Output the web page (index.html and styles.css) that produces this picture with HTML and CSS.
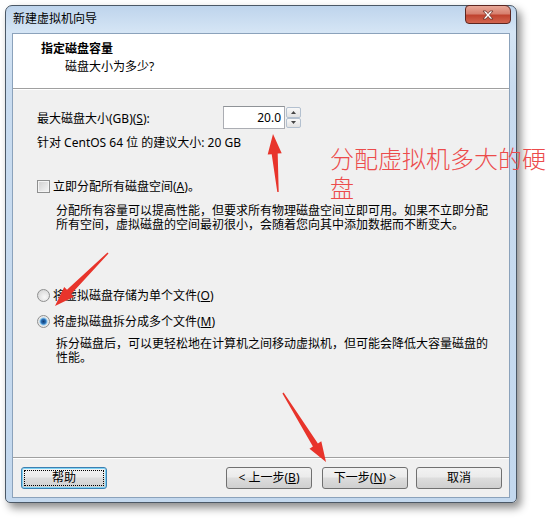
FILE: index.html
```html
<!DOCTYPE html>
<html lang="zh-CN">
<head>
<meta charset="utf-8">
<title>新建虚拟机向导</title>
<link rel="stylesheet" href="styles.css">
</head>
<body>
<div class="window">
  <div class="titlebar">
    <span class="title">新建虚拟机向导</span>
    <div class="close">
      <svg width="12" height="10" viewBox="0 0 12 10"><path d="M1 1 L4 1 L6 3.5 L8 1 L11 1 L7.5 5 L11 9 L8 9 L6 6.5 L4 9 L1 9 L4.5 5 Z" fill="#fff" stroke="#6a2d25" stroke-width="0.8" stroke-linejoin="round"/></svg>
    </div>
  </div>
  <div class="client">
    <div class="header">
      <div class="h-title">指定磁盘容量</div>
      <div class="h-sub">磁盘大小为多少?</div>
    </div>
    <div class="body">
      <div class="size-row">
        <span class="size-label">最大磁盘大小(GB)(<u>S</u>):</span>
        <div class="spin">
          <div class="spin-input">20.0</div>
          <div class="spin-btns">
            <div class="spin-btn"><svg width="5" height="3" viewBox="0 0 5 3"><polygon points="0,3 2.5,0 5,3" fill="#444"/></svg></div>
            <div class="spin-btn"><svg width="5" height="3" viewBox="0 0 5 3"><polygon points="0,0 5,0 2.5,3" fill="#444"/></svg></div>
          </div>
        </div>
      </div>
      <div class="hint">针对 CentOS 64 位 的建议大小: 20 GB</div>
      <div class="check-row"><span class="checkbox"></span><span>立即分配所有磁盘空间(<u>A</u>)。</span></div>
      <p class="desc">分配所有容量可以提高性能，但要求所有物理磁盘空间立即可用。如果不立即分配所有空间，虚拟磁盘的空间最初很小，会随着您向其中添加数据而不断变大。</p>
      <div class="radio-row first"><span class="radio"></span><span>将虚拟磁盘存储为单个文件(<u>O</u>)</span></div>
      <div class="radio-row second"><span class="radio checked"></span><span>将虚拟磁盘拆分成多个文件(<u>M</u>)</span></div>
      <p class="desc desc2">拆分磁盘后，可以更轻松地在计算机之间移动虚拟机，但可能会降低大容量磁盘的性能。</p>
    </div>
    <div class="footer">
      <button class="btn help">帮助</button>
      <div class="spacer"></div>
      <button class="btn">&lt; 上一步(<u>B</u>)</button>
      <button class="btn next">下一步(<u>N</u>) &gt;</button>
      <button class="btn cancel">取消</button>
    </div>
  </div>
</div>
<div class="note">分配虚拟机多大的硬盘</div>
<svg class="arrows" width="558" height="529" viewBox="0 0 558 529">
  <polygon points="278.7,191.9 277.7,153.6 281.7,153.3 273,134 267.7,154.5 271.7,154.2 277.3,192.1" fill="#e8342b"/>
  <polygon points="108.5,253.5 71.2,294.0 74.0,296.8 55,306 64.2,287.0 67.0,289.8 107.5,252.5" fill="#e8342b"/>
  <polygon points="282.4,393.4 312.9,446.6 309.5,448.7 326,462 321.3,441.3 317.9,443.4 283.6,392.6" fill="#e8342b"/>
</svg>
</body>
</html>
```
FILE: styles.css
```css
html, body {
  margin: 0;
}
body {
  box-sizing: border-box;
  position: relative;
  width: 558px;
  height: 529px;
  overflow: hidden;
  padding: 5px 0 0 5px;
  background: #fff;
  font-family: "Noto Sans", "Noto Sans CJK SC", sans-serif;
  font-size: 12px;
  color: #000;
}
.window {
  box-sizing: border-box;
  width: 512px;
  height: 498px;
  border: 1px solid #4b5866;
  border-radius: 7px 7px 5px 5px;
  background: linear-gradient(#bed4ec, #d5e5f5 26px, #c9dcf0 80px, #c3d8ee);
  padding: 0 6px 4px;
  box-shadow: 4px 5px 9px rgba(0, 0, 0, 0.45);
  display: flex;
  flex-direction: column;
}
.titlebar {
  height: 27px;
  display: flex;
  justify-content: space-between;
  align-items: flex-start;
}
.title {
  margin: 5px 0 0 1px;
  line-height: 16px;
}
.close {
  box-sizing: border-box;
  width: 46px;
  height: 19px;
  margin: -1px -1px 0 0;
  border: 1px solid #5c2620;
  border-radius: 4px 6px 4px 4px;
  background: linear-gradient(#e9a898, #d7806f 45%, #c0432f 55%, #d3654f);
  display: flex;
  align-items: center;
  justify-content: center;
}
.client {
  flex: 1;
  box-sizing: border-box;
  border: 1px solid #8ba2bb;
  background: #f0f0f0;
  display: flex;
  flex-direction: column;
}
.header {
  box-sizing: border-box;
  height: 55px;
  background: #fff;
  border-bottom: 1px solid #a0a0a0;
  padding: 7px 0 0 28px;
}
.h-title {
  font-weight: bold;
  line-height: 16px;
}
.h-sub {
  margin: 2px 0 0 24px;
  line-height: 16px;
}
.body {
  flex: 1;
  border-top: 1px solid #fff;
  padding: 16px 0 0 24px;
}
.size-row {
  display: flex;
  align-items: center;
  height: 23px;
}
.size-label {
  width: 186px;
}
.spin {
  display: flex;
  align-items: center;
}
.spin-input {
  box-sizing: border-box;
  width: 62px;
  height: 23px;
  border: 1px solid #abadb3;
  border-top-color: #8f9397;
  background: #fff;
  text-align: right;
  padding-right: 3px;
  line-height: 21px;
}
.spin-btns {
  margin-left: 1px;
  width: 15px;
  height: 21px;
  display: flex;
  flex-direction: column;
}
.spin-btn {
  flex: 1;
  border: 1px solid #b3c0cf;
  border-radius: 2px;
  background: linear-gradient(#f8f8f8, #e2e2e2);
  display: flex;
  align-items: center;
  justify-content: center;
}
.hint {
  margin-top: 6px;
  line-height: 16px;
}
.check-row {
  margin-top: 28px;
  height: 14px;
  display: flex;
  align-items: center;
  gap: 3px;
}
.checkbox {
  box-sizing: border-box;
  width: 13px;
  height: 13px;
  border: 1px solid #8e8f8f;
  background: linear-gradient(135deg, #cfcfcf, #f7f7f7);
  box-shadow: inset 0 0 0 1px #f4f4f4;
}
.desc {
  margin: 11px 0 0 19px;
  width: 442px;
  line-height: 14px;
}
.desc2 {
  margin-top: 9px;
}
.radio-row {
  height: 14px;
  display: flex;
  align-items: center;
  gap: 3px;
}
.radio-row.first {
  margin-top: 56px;
}
.radio-row.second {
  margin-top: 12px;
}
.radio {
  box-sizing: border-box;
  width: 13px;
  height: 13px;
  border-radius: 50%;
  border: 1px solid #8e8f8f;
  background: radial-gradient(circle at 60% 65%, #f8f8f8, #d0d0d0);
}
.radio.checked {
  background: radial-gradient(circle at 50% 50%, #0e3c72 0, #2b6fb6 2.3px, #8fcaf0 3.6px, #e6e6e6 4.4px, #f4f4f4 100%);
}
.footer {
  border-top: 1px solid #a0a0a0;
  box-shadow: inset 0 1px 0 #fff;
  padding: 9px 7px 8px 8px;
  display: flex;
}
.spacer {
  flex: 1;
}
.btn {
  box-sizing: border-box;
  width: 86px;
  height: 22px;
  padding: 0;
  border: 1px solid #707070;
  border-radius: 3px;
  background: linear-gradient(#f2f2f2, #ebebeb 45%, #dddddd 50%, #cfcfcf);
  font: inherit;
  color: #000;
  line-height: 20px;
}
.btn.help {
  border-color: #3c7fb1;
  box-shadow: inset 0 0 0 1px #7fd3f5;
  outline: 1px dotted #000;
  outline-offset: -4px;
}
.btn.next {
  margin-left: 10px;
}
.btn.cancel {
  margin-left: 8px;
}
.note {
  position: absolute;
  left: 330px;
  top: 144px;
  width: 225px;
  font-size: 24px;
  line-height: 29px;
  font-weight: 300;
  color: #ec4b4b;
}
.arrows {
  position: absolute;
  left: 0;
  top: 0;
  pointer-events: none;
}
```
